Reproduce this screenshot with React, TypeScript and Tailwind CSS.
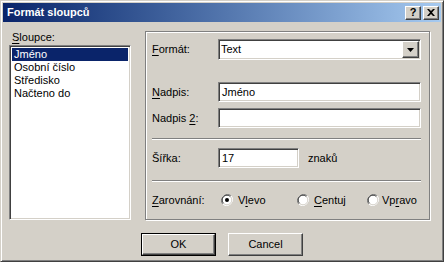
import React from 'react';

const FONT = { fontFamily: '"Liberation Sans", Arial, sans-serif' };

const sunken =
  'border border-t-[#808080] border-l-[#808080] border-b-white border-r-white shadow-[inset_1px_1px_0_#404040,inset_-1px_-1px_0_#d4d0c8] bg-white';
const raised =
  'border border-t-white border-l-white border-b-[#404040] border-r-[#404040] shadow-[inset_-1px_-1px_0_#808080,inset_1px_1px_0_#d4d0c8] bg-[#d4d0c8]';

function U({ children }: { children: React.ReactNode }) {
  return <span className="underline underline-offset-2">{children}</span>;
}

function Radio({ checked }: { checked?: boolean }) {
  return (
    <svg width="12" height="12" viewBox="0 0 12 12" className="shrink-0">
      <circle cx="6" cy="6" r="5.5" fill="#fff" />
      <path d="M1.8 10.2 A6 6 0 0 1 10.2 1.8" stroke="#808080" strokeWidth="1" fill="none" />
      <path d="M2.6 9.4 A4.8 4.8 0 0 1 9.4 2.6" stroke="#404040" strokeWidth="1" fill="none" />
      <path d="M10.2 1.8 A6 6 0 0 1 1.8 10.2" stroke="#ffffff" strokeWidth="1" fill="none" />
      <path d="M9.4 2.6 A4.8 4.8 0 0 1 2.6 9.4" stroke="#d4d0c8" strokeWidth="1" fill="none" />
      {checked && <circle cx="6" cy="6" r="2" fill="#000" />}
    </svg>
  );
}

function Separator() {
  return <div className="h-[2px] border-t border-t-[#808080] border-b border-b-white" />;
}

export default function App() {
  const columns = ['Jméno', 'Osobní číslo', 'Středisko', 'Načteno do'];

  return (
    <div
      className="w-[444px] h-[262px] bg-[#d4d0c8] text-[11px] text-black border border-t-[#d4d0c8] border-l-[#d4d0c8] border-b-[#404040] border-r-[#404040] shadow-[inset_1px_1px_0_#fff,inset_-1px_-1px_0_#808080] p-[2px] flex flex-col"
      style={FONT}
    >
      {/* Titulek */}
      <div className="h-[19px] flex items-center justify-between pl-[4px] pr-[2px] bg-gradient-to-r from-[#0a246a] to-[#a6caf0]">
        <span className="text-white font-bold text-[11px] leading-none">Formát sloupců</span>
        <div className="flex">
          <div className={`${raised} w-[16px] h-[14px] flex items-center justify-center font-bold text-[11px] leading-none`}>
            ?
          </div>
          <div className={`${raised} w-[16px] h-[14px] ml-[2px] flex items-center justify-center`}>
            <svg width="8" height="7" viewBox="0 0 8 7">
              <path d="M0 0 L2 0 L4 2 L6 0 L8 0 L5 3.5 L8 7 L6 7 L4 5 L2 7 L0 7 L3 3.5 Z" fill="#000" />
            </svg>
          </div>
        </div>
      </div>

      <div className="flex pt-[9px] pl-[6px] pr-[9px]">
        {/* Seznam sloupců */}
        <div className="flex flex-col w-[122px]">
          <div className="h-[15px] leading-[13px] pl-[3px]">
            <U>S</U>loupce:
          </div>
          <div className={`${sunken} h-[175px] p-[2px] mt-[-1px]`}>
            {columns.map((c, i) => (
              <div
                key={c}
                className={`h-[13px] leading-[13px] pl-[2px] ${i === 0 ? 'bg-[#0a246a] text-white' : ''}`}
              >
                {c}
              </div>
            ))}
          </div>
        </div>

        {/* Panel vlastností */}
        <div className="ml-[14px] w-[285px] h-[189px] border border-[#808080] shadow-[1px_1px_0_#fff,inset_1px_1px_0_#fff] pl-[6px] pr-[8px] pt-[7px] flex flex-col">
          <div className="flex items-center h-[21px]">
            <span className="w-[66px]">
              <U>F</U>ormát:
            </span>
            <div className={`${sunken} flex-1 h-[21px] flex items-center justify-between pl-[2px] pr-[1px]`}>
              <span>Text</span>
              <div className={`${raised} w-[17px] h-[17px] flex items-center justify-center`}>
                <svg width="7" height="4" viewBox="0 0 7 4">
                  <path d="M0 0 L7 0 L3.5 4 Z" fill="#000" />
                </svg>
              </div>
            </div>
          </div>

          <div className="flex items-center h-[20px] mt-[22px]">
            <span className="w-[66px]">
              <U>N</U>adpis:
            </span>
            <div className={`${sunken} flex-1 h-[20px] flex items-center pl-[3px]`}>Jméno</div>
          </div>

          <div className="flex items-center h-[20px] mt-[6px]">
            <span className="w-[66px]">
              Nadpis <U>2</U>:
            </span>
            <div className={`${sunken} flex-1 h-[20px]`} />
          </div>

          <div className="mt-[10px]">
            <Separator />
          </div>

          <div className="flex items-center h-[20px] mt-[8px]">
            <span className="w-[66px]">Šířka:</span>
            <div className={`${sunken} w-[81px] h-[20px] flex items-center pl-[3px]`}>17</div>
            <span className="ml-[9px]">znaků</span>
          </div>

          <div className="mt-[12px]">
            <Separator />
          </div>

          <div className="flex items-center h-[16px] mt-[10px]">
            <span className="w-[69px]">
              <U>Z</U>arovnání:
            </span>
            <div className="flex items-center w-[76px]">
              <Radio checked />
              <span className="ml-[5px]">
                V<U>l</U>evo
              </span>
            </div>
            <div className="flex items-center w-[70px]">
              <Radio />
              <span className="ml-[5px]">
                <U>C</U>entuj
              </span>
            </div>
            <div className="flex items-center">
              <Radio />
              <span className="ml-[3px]">
                Vp<U>r</U>avo
              </span>
            </div>
          </div>
        </div>
      </div>

      {/* Tlačítka */}
      <div className="flex justify-center gap-[12px] mt-[13px]">
        <div className="border border-black">
          <div className={`${raised} w-[73px] h-[21px] flex items-center justify-center`}>OK</div>
        </div>
        <div className={`${raised} w-[75px] h-[23px] flex items-center justify-center`}>Cancel</div>
      </div>
    </div>
  );
}
